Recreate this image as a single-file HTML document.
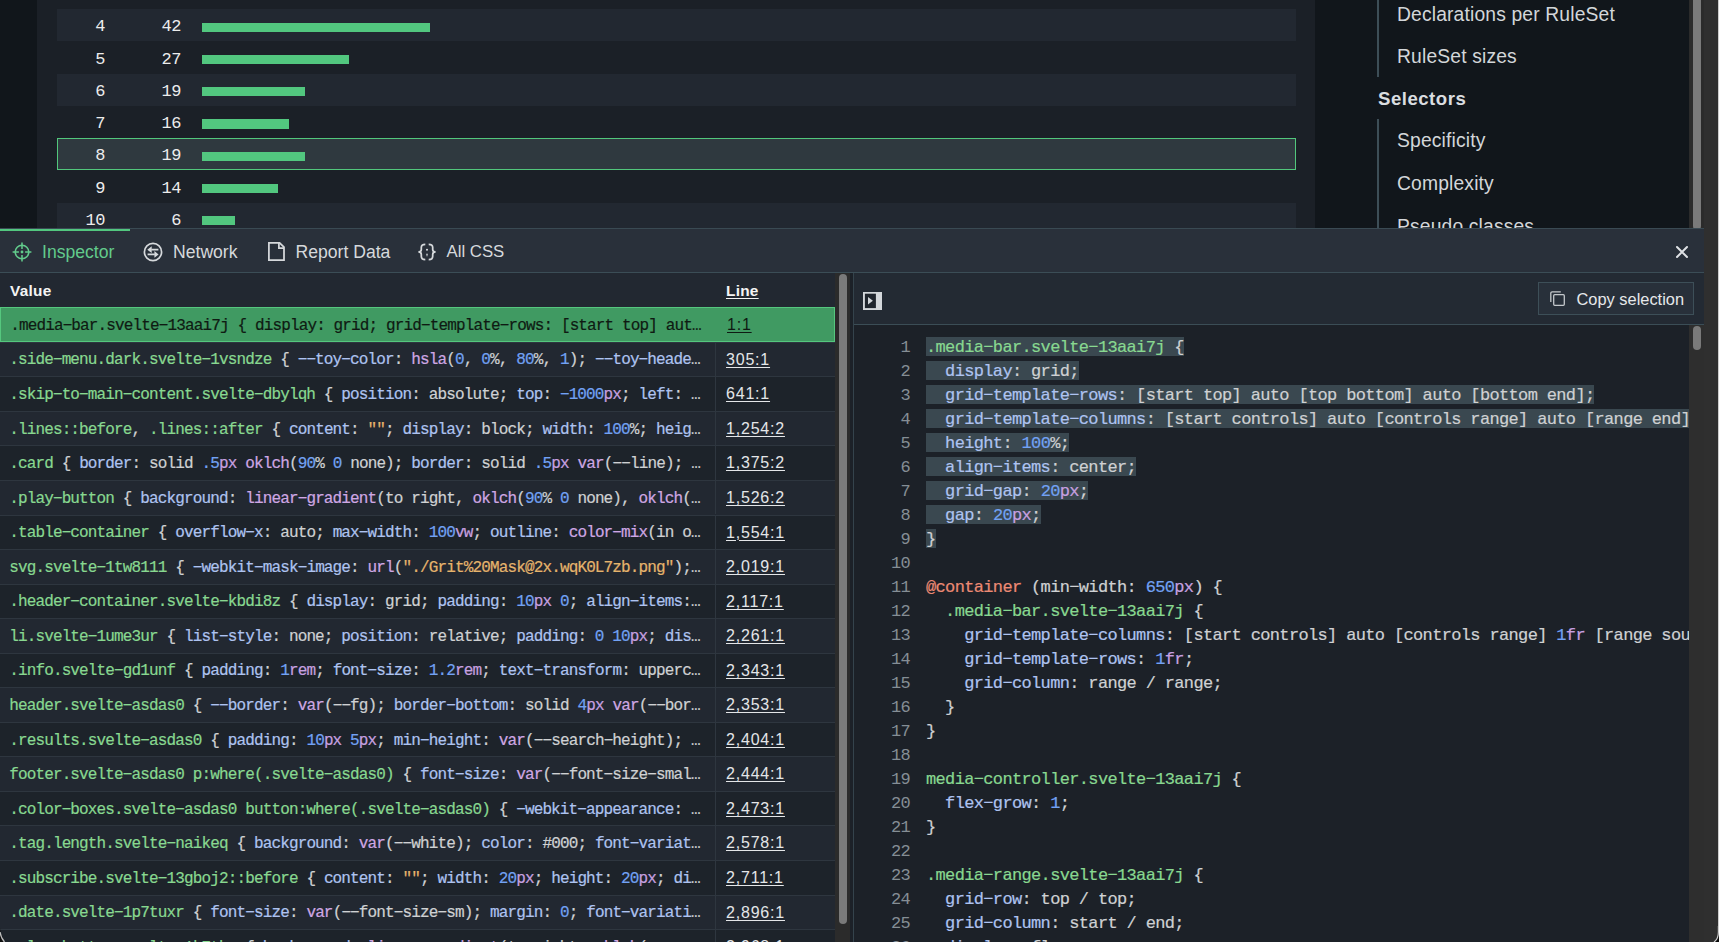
<!DOCTYPE html>
<html><head><meta charset="utf-8"><style>
*{margin:0;padding:0;box-sizing:border-box}
html,body{width:1719px;height:942px;overflow:hidden;background:#1b2027;font-family:"Liberation Sans",sans-serif}
.abs{position:absolute}
.mono{font-family:"Liberation Mono",monospace}
.g{color:#88d890}.p{color:#aec3f0}.n{color:#72a2f4}.u{color:#c7a0e0}.f{color:#cfa7e4}.s{color:#e6b46c}.a{color:#ec8a74}.t{color:#cfd1d3}
#top{left:0;top:0;width:1704px;height:228px;overflow:hidden;background:#1b2027}
#strip{left:0;top:0;width:37px;height:228px;background:#11161b}
.trow{position:absolute;left:57px;width:1239px;height:32.25px}
.trow.even{background:#222831}
.trow.sel{background:#2f393f;border:1.6px solid #52c77c;height:31.8px}
.tnum{position:absolute;font-family:"Liberation Mono",monospace;font-size:17px;letter-spacing:-0.6px;color:#ececec;text-align:right;line-height:20px;white-space:nowrap}
.bar{position:absolute;height:9.4px;background:#52c77f}
#side{left:1315px;top:0;width:374px;height:228px;background:#11161b;overflow:hidden}
.sl{position:absolute;left:82px;font-size:19.3px;color:#d3d6d9;white-space:nowrap;line-height:22px;letter-spacing:0.15px}
.sh{position:absolute;left:63px;font-size:18.6px;font-weight:bold;color:#dadde0;white-space:nowrap;line-height:22px;letter-spacing:0.5px}
.vline{position:absolute;left:62px;width:2px;background:#3d4e57}
#sbtrack{left:1689px;top:0;width:15px;height:228px;background:#2b2b2b}
#sbthumb{left:1693px;top:-10px;width:8px;height:240px;background:#7a7a7a;border-radius:4px}
#outer{left:1704px;top:0;width:15px;height:942px;background:#2f2f2f}
#edge{left:1717.8px;top:0;width:1.2px;height:927px;background:#cdcdcd}
#panel{left:0;top:228px;width:1704px;height:714px;background:#29303a}
#tabs{left:0;top:0;width:1704px;height:45px;border-top:1px solid #3a4a53;border-bottom:1px solid #3b4d56}
#tabul{left:0;top:-0.4px;width:130px;height:2.5px;background:#52c77f}
.tab{position:absolute;font-size:17.6px;color:#d6d9dc;white-space:nowrap;line-height:20px}
#ltable{left:0;top:45px;width:835px;height:669px;background:#222831;overflow:hidden}
.lrow{position:absolute;left:0;width:835px;height:34.55px;border-top:1px solid #2e363f;font-size:16.0px;letter-spacing:-0.861px;white-space:nowrap;line-height:20px}
.lrow.odd{background:#1d232a}
.lrow .v{-webkit-text-stroke:0.2px currentColor;position:absolute;left:9.2px;color:#cfd1d3}
.lrow .ln{position:absolute;left:726px;font-family:"Liberation Sans",sans-serif;font-size:16px;letter-spacing:0.8px;color:#e4e6e8;text-decoration:underline;text-decoration-thickness:1px;text-underline-offset:2px}
.lrow .div{position:absolute;left:715px;top:0;width:1px;height:100%;background:#2e363f}
.lrow.sel{background:#409a62;border:1.5px solid #55c77e}
.lrow.sel .v,.lrow.sel .v span{color:#0f1a13}
.lrow.sel .ln{color:#0f1a13}
#lsb{left:835px;top:45px;width:15px;height:669px;background:#2b2b2b}
#lsbthumb{left:839px;top:46px;width:8px;height:650px;background:#7a7a7a;border-radius:4px}
#gap{left:850px;top:45px;width:3px;height:669px;background:#1c2128}
#rpane{left:853px;top:45px;width:851px;height:669px;background:#232a33;border-left:1px solid #34434c}
#rhead{left:0;top:0;width:850px;height:52px;border-bottom:1px solid #3b4d56}
#code{left:0;top:52px;width:835px;height:617px;background:#1c2128;overflow:hidden}
#csb{left:835px;top:52px;width:15px;height:617px;background:#2e2e2e}
#csbthumb{left:839px;top:53px;width:8px;height:24.2px;background:#7a7a7a;border-radius:4px}
.hl{position:absolute;left:72px;height:19px;background:#3a4850}
.cl{-webkit-text-stroke:0.2px currentColor;position:absolute;left:0;width:2000px;font-size:17.0px;letter-spacing:-0.652px;white-space:pre;line-height:20px}
.cn{-webkit-text-stroke:0;position:absolute;left:0;width:56px;text-align:right;color:#858e95}
.cc{position:absolute;left:72px;color:#cfd1d3}
</style></head><body>

<div id="top" class="abs"><div id="strip" class="abs"></div>
<div class="trow" style="top:-23.25px"></div>
<div class="tnum" style="left:40px;width:64.8px;top:-14.77px">3</div>
<div class="trow even" style="top:9.00px"></div>
<div class="tnum" style="left:40px;width:64.8px;top:17.48px">4</div>
<div class="tnum" style="left:120px;width:60.8px;top:17.48px">42</div>
<div class="bar" style="left:202px;top:22.60px;width:228.1px"></div>
<div class="trow" style="top:41.25px"></div>
<div class="tnum" style="left:40px;width:64.8px;top:49.73px">5</div>
<div class="tnum" style="left:120px;width:60.8px;top:49.73px">27</div>
<div class="bar" style="left:202px;top:54.85px;width:146.6px"></div>
<div class="trow even" style="top:73.50px"></div>
<div class="tnum" style="left:40px;width:64.8px;top:81.98px">6</div>
<div class="tnum" style="left:120px;width:60.8px;top:81.98px">19</div>
<div class="bar" style="left:202px;top:87.10px;width:103.2px"></div>
<div class="trow" style="top:105.75px"></div>
<div class="tnum" style="left:40px;width:64.8px;top:114.23px">7</div>
<div class="tnum" style="left:120px;width:60.8px;top:114.23px">16</div>
<div class="bar" style="left:202px;top:119.35px;width:86.9px"></div>
<div class="trow sel" style="top:138.00px"></div>
<div class="tnum" style="left:40px;width:64.8px;top:146.48px">8</div>
<div class="tnum" style="left:120px;width:60.8px;top:146.48px">19</div>
<div class="bar" style="left:202px;top:151.60px;width:103.2px"></div>
<div class="trow" style="top:170.25px"></div>
<div class="tnum" style="left:40px;width:64.8px;top:178.73px">9</div>
<div class="tnum" style="left:120px;width:60.8px;top:178.73px">14</div>
<div class="bar" style="left:202px;top:183.85px;width:76.0px"></div>
<div class="trow even" style="top:202.50px"></div>
<div class="tnum" style="left:40px;width:64.8px;top:210.98px">10</div>
<div class="tnum" style="left:120px;width:60.8px;top:210.98px">6</div>
<div class="bar" style="left:202px;top:216.10px;width:32.6px"></div>
</div>
<div id="side" class="abs">
<div class="vline" style="top:0;height:77px"></div>
<div class="vline" style="top:119px;height:120px"></div>
<div class="sl" style="top:4.31px">Declarations per RuleSet</div>
<div class="sl" style="top:46.41px">RuleSet sizes</div>
<div class="sh" style="top:87.65px">Selectors</div>
<div class="sl" style="top:129.61px">Specificity</div>
<div class="sl" style="top:173.31px">Complexity</div>
<div class="sl" style="top:215.91px">Pseudo classes</div>
</div>
<div id="sbtrack" class="abs"></div><div id="sbthumb" class="abs"></div>
<div id="panel" class="abs">
<div id="tabs" class="abs"><div id="tabul" class="abs"></div>
<svg class="abs" style="left:11.1px;top:11.5px" width="22" height="22" viewBox="0 0 22 22" fill="none" stroke="#62cb8c" stroke-width="1.55"><circle cx="11" cy="11" r="6.8"/><path d="M11 1.6V7.9M11 14.1V20.4M1.6 11H7.9M14.1 11H20.4"/><circle cx="11" cy="11" r="1.4" fill="#62cb8c" stroke="none"/></svg>
<div class="tab" style="left:42px;top:13.20px;color:#62cb8c">Inspector</div>
<svg class="abs" style="left:142.45px;top:11.5px" width="22" height="22" viewBox="0 0 22 22" fill="none" stroke="#d6d9dc" stroke-width="1.7"><circle cx="11" cy="11" r="8.6"/><path d="M9.3 8.7H16.4M5.6 13.4H12.8" stroke-width="1.7"/><path d="M5.3 8.7L9.7 5.3V12.1z M16.6 13.4L12.4 10.1V16.7z" fill="#d6d9dc" stroke="none"/></svg>
<div class="tab" style="left:173px;top:13.20px">Network</div>
<svg class="abs" style="left:266px;top:11px" width="20" height="22" viewBox="0 0 20 22" fill="none" stroke="#d6d9dc" stroke-width="1.75"><path d="M2.9 2.8H13.6L18 7.2V20.1H2.9Z"/><path d="M12.9 2.8V8.2H18"/></svg>
<div class="tab" style="left:295.5px;top:13.20px">Report Data</div>
<svg class="abs" style="left:415.6px;top:11.6px" width="22" height="22" viewBox="0 0 22 22" fill="none" stroke="#d6d9dc" stroke-width="1.75"><path d="M9.3 3.4C6.2 3.4 5.3 4.6 5.3 6.6V8.4C5.3 10 4.4 10.9 2.4 10.9C4.4 10.9 5.3 11.8 5.3 13.4V15.2C5.3 17.2 6.2 18.6 9.3 18.6M12.7 3.4C15.8 3.4 16.7 4.6 16.7 6.6V8.4C16.7 10 17.6 10.9 19.6 10.9C17.6 10.9 16.7 11.8 16.7 13.4V15.2C16.7 17.2 15.8 18.6 12.7 18.6"/><circle cx="11" cy="8.7" r="1.05" fill="#d6d9dc" stroke="none"/><path d="M10.1 12.8H11.9L11.2 15.4H10.8Z" fill="#d6d9dc" stroke="none"/></svg>
<div class="tab" style="left:446.5px;top:13.20px;font-size:16.8px">All CSS</div>
<svg class="abs" style="left:1674.3px;top:15.1px" width="16" height="16" viewBox="0 0 16 16" stroke="#dfe2e5" stroke-width="2" stroke-linecap="round"><path d="M3 3L13 13M13 3L3 13"/></svg>
</div>
<div id="ltable" class="abs">
<div class="abs" style="left:10px;top:8.56px;font-size:15.4px;letter-spacing:0.25px;font-weight:bold;color:#f4f4f4;line-height:18px">Value</div>
<div class="abs" style="left:726px;top:8.56px;font-size:15.4px;letter-spacing:0.25px;font-weight:bold;color:#f4f4f4;line-height:18px;text-decoration:underline;text-decoration-thickness:1px;text-underline-offset:2px">Line</div>
<div class="lrow mono sel" style="top:34.20px"><div class="v" style="top:7.74px"><span class="g">.media−bar.svelte−13aai7j</span> { <span class="p">display</span>: grid; <span class="p">grid−template−rows</span>: [start top] aut…</div><div class="ln" style="top:7.05px">1:1</div></div>
<div class="lrow mono" style="top:68.75px"><div class="div"></div><div class="v" style="top:7.74px"><span class="g">.side−menu.dark.svelte−1vsndze</span> { <span class="p">−−toy−color</span>: <span class="f">hsla</span>(<span class="n">0</span>, <span class="n">0</span><span class="t">%</span>, <span class="n">80</span><span class="t">%</span>, <span class="n">1</span>); <span class="p">−−toy−heade</span>…</div><div class="ln" style="top:7.05px">305:1</div></div>
<div class="lrow mono odd" style="top:103.30px"><div class="div"></div><div class="v" style="top:7.74px"><span class="g">.skip−to−main−content.svelte−dbylqh</span> { <span class="p">position</span>: absolute; <span class="p">top</span>: <span class="n">−1000</span><span class="u">px</span>; <span class="p">left</span>: …</div><div class="ln" style="top:7.05px">641:1</div></div>
<div class="lrow mono" style="top:137.85px"><div class="div"></div><div class="v" style="top:7.74px"><span class="g">.lines::before</span>, <span class="g">.lines::after</span> { <span class="p">content</span>: <span class="s">""</span>; <span class="p">display</span>: block; <span class="p">width</span>: <span class="n">100</span><span class="t">%</span>; <span class="p">heig</span>…</div><div class="ln" style="top:7.05px">1,254:2</div></div>
<div class="lrow mono odd" style="top:172.40px"><div class="div"></div><div class="v" style="top:7.74px"><span class="g">.card</span> { <span class="p">border</span>: solid <span class="n">.5</span><span class="u">px</span> <span class="f">oklch</span>(<span class="n">90</span><span class="t">%</span> <span class="n">0</span> none); <span class="p">border</span>: solid <span class="n">.5</span><span class="u">px</span> <span class="f">var</span>(<span class="t">−−line</span>); …</div><div class="ln" style="top:7.05px">1,375:2</div></div>
<div class="lrow mono" style="top:206.95px"><div class="div"></div><div class="v" style="top:7.74px"><span class="g">.play−button</span> { <span class="p">background</span>: <span class="f">linear−gradient</span>(to right, <span class="f">oklch</span>(<span class="n">90</span><span class="t">%</span> <span class="n">0</span> none), <span class="f">oklch</span>(…</div><div class="ln" style="top:7.05px">1,526:2</div></div>
<div class="lrow mono odd" style="top:241.50px"><div class="div"></div><div class="v" style="top:7.74px"><span class="g">.table−container</span> { <span class="p">overflow−x</span>: auto; <span class="p">max−width</span>: <span class="n">100</span><span class="u">vw</span>; <span class="p">outline</span>: <span class="f">color−mix</span>(in o…</div><div class="ln" style="top:7.05px">1,554:1</div></div>
<div class="lrow mono" style="top:276.05px"><div class="div"></div><div class="v" style="top:7.74px"><span class="g">svg.svelte−1tw8111</span> { <span class="p">−webkit−mask−image</span>: <span class="f">url</span>(<span class="s">"./Grit%20Mask@2x.wqK0L7zb.png"</span>);…</div><div class="ln" style="top:7.05px">2,019:1</div></div>
<div class="lrow mono odd" style="top:310.60px"><div class="div"></div><div class="v" style="top:7.74px"><span class="g">.header−container.svelte−kbdi8z</span> { <span class="p">display</span>: grid; <span class="p">padding</span>: <span class="n">10</span><span class="u">px</span> <span class="n">0</span>; <span class="p">align−items</span>:…</div><div class="ln" style="top:7.05px">2,117:1</div></div>
<div class="lrow mono" style="top:345.15px"><div class="div"></div><div class="v" style="top:7.74px"><span class="g">li.svelte−1ume3ur</span> { <span class="p">list−style</span>: none; <span class="p">position</span>: relative; <span class="p">padding</span>: <span class="n">0</span> <span class="n">10</span><span class="u">px</span>; <span class="p">dis</span>…</div><div class="ln" style="top:7.05px">2,261:1</div></div>
<div class="lrow mono odd" style="top:379.70px"><div class="div"></div><div class="v" style="top:7.74px"><span class="g">.info.svelte−gd1unf</span> { <span class="p">padding</span>: <span class="n">1</span><span class="u">rem</span>; <span class="p">font−size</span>: <span class="n">1.2</span><span class="u">rem</span>; <span class="p">text−transform</span>: upperc…</div><div class="ln" style="top:7.05px">2,343:1</div></div>
<div class="lrow mono" style="top:414.25px"><div class="div"></div><div class="v" style="top:7.74px"><span class="g">header.svelte−asdas0</span> { <span class="p">−−border</span>: <span class="f">var</span>(<span class="t">−−fg</span>); <span class="p">border−bottom</span>: solid <span class="n">4</span><span class="u">px</span> <span class="f">var</span>(<span class="t">−−bor</span>…</div><div class="ln" style="top:7.05px">2,353:1</div></div>
<div class="lrow mono odd" style="top:448.80px"><div class="div"></div><div class="v" style="top:7.74px"><span class="g">.results.svelte−asdas0</span> { <span class="p">padding</span>: <span class="n">10</span><span class="u">px</span> <span class="n">5</span><span class="u">px</span>; <span class="p">min−height</span>: <span class="f">var</span>(<span class="t">−−search−height</span>); …</div><div class="ln" style="top:7.05px">2,404:1</div></div>
<div class="lrow mono" style="top:483.35px"><div class="div"></div><div class="v" style="top:7.74px"><span class="g">footer.svelte−asdas0 p:where(.svelte−asdas0)</span> { <span class="p">font−size</span>: <span class="f">var</span>(<span class="t">−−font−size−smal</span>…</div><div class="ln" style="top:7.05px">2,444:1</div></div>
<div class="lrow mono odd" style="top:517.90px"><div class="div"></div><div class="v" style="top:7.74px"><span class="g">.color−boxes.svelte−asdas0 button:where(.svelte−asdas0)</span> { <span class="p">−webkit−appearance</span>: …</div><div class="ln" style="top:7.05px">2,473:1</div></div>
<div class="lrow mono" style="top:552.45px"><div class="div"></div><div class="v" style="top:7.74px"><span class="g">.tag.length.svelte−naikeq</span> { <span class="p">background</span>: <span class="f">var</span>(<span class="t">−−white</span>); <span class="p">color</span>: <span class="t">#000</span>; <span class="p">font−variat</span>…</div><div class="ln" style="top:7.05px">2,578:1</div></div>
<div class="lrow mono odd" style="top:587.00px"><div class="div"></div><div class="v" style="top:7.74px"><span class="g">.subscribe.svelte−13gboj2::before</span> { <span class="p">content</span>: <span class="s">""</span>; <span class="p">width</span>: <span class="n">20</span><span class="u">px</span>; <span class="p">height</span>: <span class="n">20</span><span class="u">px</span>; <span class="p">di</span>…</div><div class="ln" style="top:7.05px">2,711:1</div></div>
<div class="lrow mono" style="top:621.55px"><div class="div"></div><div class="v" style="top:7.74px"><span class="g">.date.svelte−1p7tuxr</span> { <span class="p">font−size</span>: <span class="f">var</span>(<span class="t">−−font−size−sm</span>); <span class="p">margin</span>: <span class="n">0</span>; <span class="p">font−variati</span>…</div><div class="ln" style="top:7.05px">2,896:1</div></div>
<div class="lrow mono odd" style="top:656.10px"><div class="div"></div><div class="v" style="top:7.74px"><span class="g">.play−button.svelte−1k7tbz</span> { <span class="p">background</span>: <span class="f">linear−gradient</span>(to right, <span class="f">oklch</span>(…</div><div class="ln" style="top:7.05px">2,968:1</div></div>
</div>
<div id="lsb" class="abs"></div><div id="lsbthumb" class="abs"></div><div id="gap" class="abs"></div>
<div id="rpane" class="abs">
<div id="rhead" class="abs">
<svg class="abs" style="left:8.9px;top:18.7px" width="19" height="18" viewBox="0 0 19 18"><rect x="0" y="0" width="19" height="18" fill="#d3d7db"/><rect x="1.9" y="1.7" width="11" height="14.4" fill="#1f252d"/><path d="M5 5.1L9.9 8.7 5 12.4z" fill="#d3d7db"/></svg>
<div class="abs" style="left:684px;top:9px;width:156px;height:32.7px;border:1px solid #3d4f58;background:#28303a"></div>
<svg class="abs" style="left:695px;top:17px" width="17" height="17" viewBox="0 0 17 17" fill="none" stroke="#c3c7cb" stroke-width="1.3"><path d="M1.8 12V3.3C1.8 2.6 2.4 1.8 3.1 1.8H11.8"/><rect x="4.7" y="4.7" width="10.6" height="10.6" rx="1"/></svg>
<div class="abs" style="left:722.5px;top:17.01px;font-size:16.4px;color:#e6e8ea;white-space:nowrap;line-height:19px">Copy selection</div>
</div>
<div id="code" class="abs mono">
<div class="hl" style="top:12.00px;width:257.6px"></div>
<div class="cl" style="top:12.78px"><span class="cn">1</span><span class="cc"><span class="g">.media−bar.svelte−13aai7j</span> {</span></div>
<div class="hl" style="top:36.00px;width:152.6px"></div>
<div class="cl" style="top:36.78px"><span class="cn">2</span><span class="cc">  <span class="p">display</span>: grid;</span></div>
<div class="hl" style="top:60.00px;width:667.8px"></div>
<div class="cl" style="top:60.78px"><span class="cn">3</span><span class="cc">  <span class="p">grid−template−rows</span>: [start top] auto [top bottom] auto [bottom end];</span></div>
<div class="hl" style="top:84.00px;width:772.7px"></div>
<div class="cl" style="top:84.78px"><span class="cn">4</span><span class="cc">  <span class="p">grid−template−columns</span>: [start controls] auto [controls range] auto [range end];</span></div>
<div class="hl" style="top:108.00px;width:143.1px"></div>
<div class="cl" style="top:108.78px"><span class="cn">5</span><span class="cc">  <span class="p">height</span>: <span class="n">100</span><span class="t">%</span>;</span></div>
<div class="hl" style="top:132.00px;width:209.9px"></div>
<div class="cl" style="top:132.78px"><span class="cn">6</span><span class="cc">  <span class="p">align−items</span>: center;</span></div>
<div class="hl" style="top:156.00px;width:162.2px"></div>
<div class="cl" style="top:156.78px"><span class="cn">7</span><span class="cc">  <span class="p">grid−gap</span>: <span class="n">20</span><span class="u">px</span>;</span></div>
<div class="hl" style="top:180.00px;width:114.5px"></div>
<div class="cl" style="top:180.78px"><span class="cn">8</span><span class="cc">  <span class="p">gap</span>: <span class="n">20</span><span class="u">px</span>;</span></div>
<div class="hl" style="top:204.00px;width:9.5px"></div>
<div class="cl" style="top:204.78px"><span class="cn">9</span><span class="cc">}</span></div>
<div class="cl" style="top:228.78px"><span class="cn">10</span><span class="cc"></span></div>
<div class="cl" style="top:252.78px"><span class="cn">11</span><span class="cc"><span class="a">@container</span> (min−width: <span class="n">650</span><span class="u">px</span>) {</span></div>
<div class="cl" style="top:276.78px"><span class="cn">12</span><span class="cc">  <span class="g">.media−bar.svelte−13aai7j</span> {</span></div>
<div class="cl" style="top:300.78px"><span class="cn">13</span><span class="cc">    <span class="p">grid−template−columns</span>: [start controls] auto [controls range] <span class="n">1</span><span class="u">fr</span> [range source] auto [source end];</span></div>
<div class="cl" style="top:324.78px"><span class="cn">14</span><span class="cc">    <span class="p">grid−template−rows</span>: <span class="n">1</span><span class="u">fr</span>;</span></div>
<div class="cl" style="top:348.78px"><span class="cn">15</span><span class="cc">    <span class="p">grid−column</span>: range / range;</span></div>
<div class="cl" style="top:372.78px"><span class="cn">16</span><span class="cc">  }</span></div>
<div class="cl" style="top:396.78px"><span class="cn">17</span><span class="cc">}</span></div>
<div class="cl" style="top:420.78px"><span class="cn">18</span><span class="cc"></span></div>
<div class="cl" style="top:444.78px"><span class="cn">19</span><span class="cc"><span class="g">media−controller.svelte−13aai7j</span> {</span></div>
<div class="cl" style="top:468.78px"><span class="cn">20</span><span class="cc">  <span class="p">flex−grow</span>: <span class="n">1</span>;</span></div>
<div class="cl" style="top:492.78px"><span class="cn">21</span><span class="cc">}</span></div>
<div class="cl" style="top:516.78px"><span class="cn">22</span><span class="cc"></span></div>
<div class="cl" style="top:540.78px"><span class="cn">23</span><span class="cc"><span class="g">.media−range.svelte−13aai7j</span> {</span></div>
<div class="cl" style="top:564.78px"><span class="cn">24</span><span class="cc">  <span class="p">grid−row</span>: top / top;</span></div>
<div class="cl" style="top:588.78px"><span class="cn">25</span><span class="cc">  <span class="p">grid−column</span>: start / end;</span></div>
<div class="cl" style="top:612.78px"><span class="cn">26</span><span class="cc">  <span class="p">display</span>: flex;</span></div>
<div class="cl" style="top:636.78px"><span class="cn">27</span><span class="cc">}</span></div>
</div>
<div id="csb" class="abs"></div><div id="csbthumb" class="abs"></div>
</div>
</div>
<div id="outer" class="abs"></div><div id="edge" class="abs"></div>
<svg class="abs" style="left:1707px;top:926px" width="12" height="16" viewBox="0 0 12 16"><path d="M12 0V16H7C10 14 11.4 11 11.4 6V0Z" fill="#0b0b0b"/><path d="M11.4 0V6C11.4 11 10 14 7 16" fill="none" stroke="#cdcdcd" stroke-width="1.2"/></svg>
<svg class="abs" style="left:0;top:928px" width="8" height="14" viewBox="0 0 8 14"><path d="M0 0C0.5 6 2 10 5 14H0Z" fill="#101010"/><path d="M0 4C0.6 8 2 11 4.5 14" fill="none" stroke="#bdbdbd" stroke-width="1.3"/></svg>
</body></html>
